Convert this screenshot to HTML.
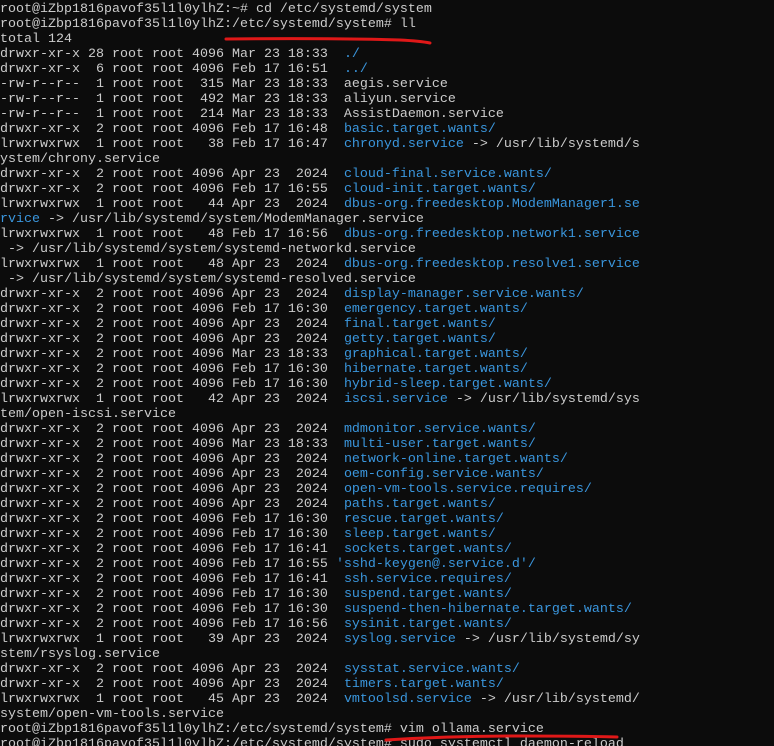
<!DOCTYPE html>
<html><head><meta charset="utf-8"><style>
html,body{margin:0;padding:0;background:#0c0c0c;width:774px;height:746px;overflow:hidden}
pre{margin:0;padding:2px 0 0 0;font-family:"Liberation Mono",monospace;font-size:13.33px;line-height:15px;color:#cccccc;white-space:pre}
b{font-weight:normal;color:#3a96dd}
svg{position:absolute;left:0;top:0}
</style></head><body>
<pre>root@iZbp1816pavof35l1l0ylhZ:~# cd /etc/systemd/system
root@iZbp1816pavof35l1l0ylhZ:/etc/systemd/system# ll
total 124
drwxr-xr-x 28 root root 4096 Mar 23 18:33  <b>./</b>
drwxr-xr-x  6 root root 4096 Feb 17 16:51  <b>../</b>
-rw-r--r--  1 root root  315 Mar 23 18:33  aegis.service
-rw-r--r--  1 root root  492 Mar 23 18:33  aliyun.service
-rw-r--r--  1 root root  214 Mar 23 18:33  AssistDaemon.service
drwxr-xr-x  2 root root 4096 Feb 17 16:48  <b>basic.target.wants/</b>
lrwxrwxrwx  1 root root   38 Feb 17 16:47  <b>chronyd.service</b> -&gt; /usr/lib/systemd/s
ystem/chrony.service
drwxr-xr-x  2 root root 4096 Apr 23  2024  <b>cloud-final.service.wants/</b>
drwxr-xr-x  2 root root 4096 Feb 17 16:55  <b>cloud-init.target.wants/</b>
lrwxrwxrwx  1 root root   44 Apr 23  2024  <b>dbus-org.freedesktop.ModemManager1.se</b>
<b>rvice</b> -&gt; /usr/lib/systemd/system/ModemManager.service
lrwxrwxrwx  1 root root   48 Feb 17 16:56  <b>dbus-org.freedesktop.network1.service</b>
 -&gt; /usr/lib/systemd/system/systemd-networkd.service
lrwxrwxrwx  1 root root   48 Apr 23  2024  <b>dbus-org.freedesktop.resolve1.service</b>
 -&gt; /usr/lib/systemd/system/systemd-resolved.service
drwxr-xr-x  2 root root 4096 Apr 23  2024  <b>display-manager.service.wants/</b>
drwxr-xr-x  2 root root 4096 Feb 17 16:30  <b>emergency.target.wants/</b>
drwxr-xr-x  2 root root 4096 Apr 23  2024  <b>final.target.wants/</b>
drwxr-xr-x  2 root root 4096 Apr 23  2024  <b>getty.target.wants/</b>
drwxr-xr-x  2 root root 4096 Mar 23 18:33  <b>graphical.target.wants/</b>
drwxr-xr-x  2 root root 4096 Feb 17 16:30  <b>hibernate.target.wants/</b>
drwxr-xr-x  2 root root 4096 Feb 17 16:30  <b>hybrid-sleep.target.wants/</b>
lrwxrwxrwx  1 root root   42 Apr 23  2024  <b>iscsi.service</b> -&gt; /usr/lib/systemd/sys
tem/open-iscsi.service
drwxr-xr-x  2 root root 4096 Apr 23  2024  <b>mdmonitor.service.wants/</b>
drwxr-xr-x  2 root root 4096 Mar 23 18:33  <b>multi-user.target.wants/</b>
drwxr-xr-x  2 root root 4096 Apr 23  2024  <b>network-online.target.wants/</b>
drwxr-xr-x  2 root root 4096 Apr 23  2024  <b>oem-config.service.wants/</b>
drwxr-xr-x  2 root root 4096 Apr 23  2024  <b>open-vm-tools.service.requires/</b>
drwxr-xr-x  2 root root 4096 Apr 23  2024  <b>paths.target.wants/</b>
drwxr-xr-x  2 root root 4096 Feb 17 16:30  <b>rescue.target.wants/</b>
drwxr-xr-x  2 root root 4096 Feb 17 16:30  <b>sleep.target.wants/</b>
drwxr-xr-x  2 root root 4096 Feb 17 16:41  <b>sockets.target.wants/</b>
drwxr-xr-x  2 root root 4096 Feb 17 16:55 <b>'sshd-keygen@.service.d'/</b>
drwxr-xr-x  2 root root 4096 Feb 17 16:41  <b>ssh.service.requires/</b>
drwxr-xr-x  2 root root 4096 Feb 17 16:30  <b>suspend.target.wants/</b>
drwxr-xr-x  2 root root 4096 Feb 17 16:30  <b>suspend-then-hibernate.target.wants/</b>
drwxr-xr-x  2 root root 4096 Feb 17 16:56  <b>sysinit.target.wants/</b>
lrwxrwxrwx  1 root root   39 Apr 23  2024  <b>syslog.service</b> -&gt; /usr/lib/systemd/sy
stem/rsyslog.service
drwxr-xr-x  2 root root 4096 Apr 23  2024  <b>sysstat.service.wants/</b>
drwxr-xr-x  2 root root 4096 Apr 23  2024  <b>timers.target.wants/</b>
lrwxrwxrwx  1 root root   45 Apr 23  2024  <b>vmtoolsd.service</b> -&gt; /usr/lib/systemd/
system/open-vm-tools.service
root@iZbp1816pavof35l1l0ylhZ:/etc/systemd/system# vim ollama.service
root@iZbp1816pavof35l1l0ylhZ:/etc/systemd/system# sudo systemctl daemon-reload</pre>
<svg width="774" height="746"><path d="M226 39 Q330 38 400 40 Q420 41 430 43" stroke="#e01818" stroke-width="3" fill="none" stroke-linecap="round"/>
<path d="M386 740 Q450 736 520 736 Q580 736 617 737" stroke="#e01818" stroke-width="3" fill="none" stroke-linecap="round"/></svg>
</body></html>
